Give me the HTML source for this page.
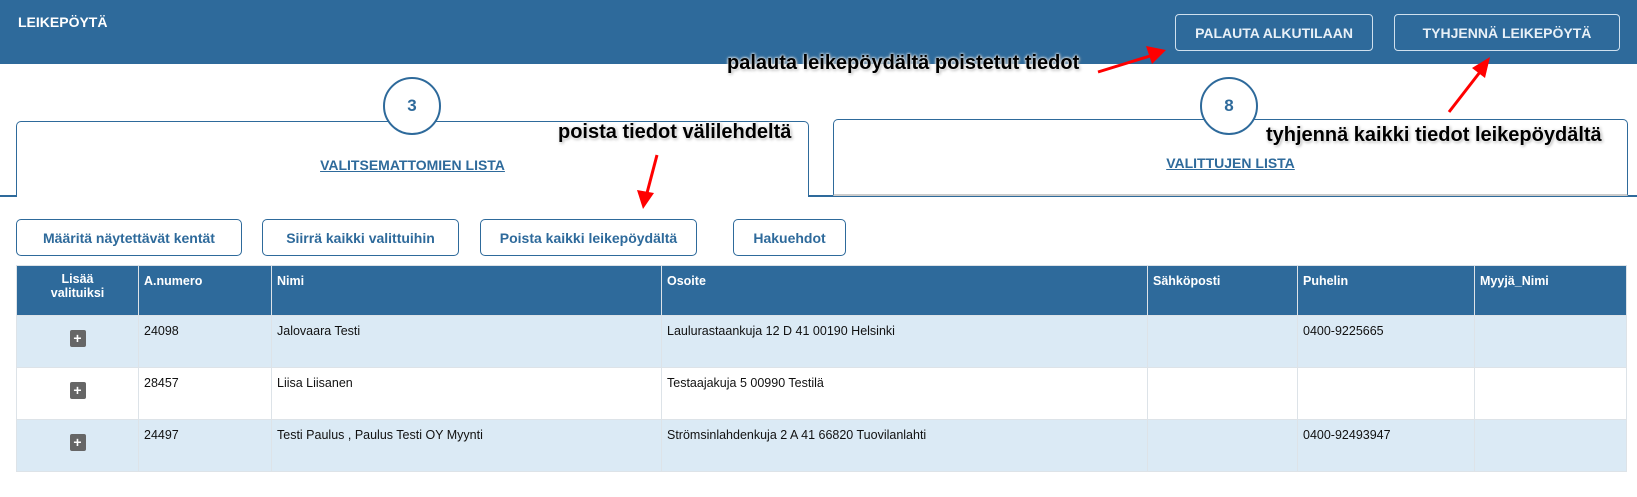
<!DOCTYPE html>
<html><head><meta charset="utf-8"><style>
*{box-sizing:border-box;margin:0;padding:0}
body{width:1637px;height:497px;background:#fff;font-family:"Liberation Sans",Arial,sans-serif;position:relative;overflow:hidden}
.hdr{position:absolute;left:0;top:0;width:1637px;height:64px;background:#2e6a9b}
.title{position:absolute;left:18px;top:14px;color:#fff;font-weight:bold;font-size:14px}
.hb{position:absolute;top:14px;height:37px;border:1px solid #cfe0ee;border-radius:4px;color:#e8f0f7;font-weight:bold;font-size:14px;display:flex;align-items:center;justify-content:center}
.line{position:absolute;top:195px;height:2px;background:#2e6a9b}
.tab{position:absolute;border:1.5px solid #2e6a9b;border-bottom:none;border-radius:5px 5px 0 0;background:#fff}
.tab a{position:absolute;left:0;right:0;text-align:center;color:#2e6a9b;font-weight:bold;font-size:14px;text-decoration:underline}
.circ{position:absolute;width:58px;height:58px;border:2px solid #2e6a9b;border-radius:50%;background:#fff;color:#2e6a9b;font-weight:bold;font-size:17px;display:flex;align-items:center;justify-content:center}
.btn{position:absolute;top:219px;height:37px;border:1px solid #2e6a9b;border-radius:5px;color:#2e6a9b;font-weight:bold;font-size:14px;display:flex;align-items:center;justify-content:center}
table{position:absolute;left:16px;top:265px;width:1611px;border-collapse:collapse;font-size:12.5px}
th{background:#2e6a9b;color:#fff;font-weight:bold;text-align:left;vertical-align:top;padding:8px 5px;height:50px;border:1px solid #dde3e8}
td{vertical-align:top;padding:8px 5px;height:52px;border:1px solid #dde3e8;color:#111}
tr.a td{background:#dbeaf5}
.plus{display:inline-block;width:16px;height:17px;background:#666;color:#fff;font-weight:bold;font-size:14px;line-height:16px;text-align:center;border-radius:2px;margin-top:6px}
.ann{position:absolute;font-weight:bold;font-size:20px;color:#000;white-space:nowrap;text-shadow:0 0 2px #fff,0 0 3px #fff,1px 1px 3px #888}
</style></head><body>
<div class="hdr"></div>
<div class="title">LEIKEPÖYTÄ</div>
<div class="hb" style="left:1175px;width:198px">PALAUTA ALKUTILAAN</div>
<div class="hb" style="left:1394px;width:226px">TYHJENNÄ LEIKEPÖYTÄ</div>

<div class="line" style="left:0;width:16px"></div>
<div class="line" style="left:808px;width:829px"></div>
<div class="tab" style="left:16px;top:121px;width:793px;height:76px"><a style="top:35px">VALITSEMATTOMIEN LISTA</a></div>
<div class="tab" style="left:833px;top:119px;width:795px;height:77px;border-bottom:2px solid #ccc"><a style="top:35px">VALITTUJEN LISTA</a></div>
<div class="circ" style="left:383px;top:77px">3</div>
<div class="circ" style="left:1200px;top:77px">8</div>

<div class="btn" style="left:16px;width:226px">Määritä näytettävät kentät</div>
<div class="btn" style="left:262px;width:197px">Siirrä kaikki valittuihin</div>
<div class="btn" style="left:480px;width:217px">Poista kaikki leikepöydältä</div>
<div class="btn" style="left:733px;width:113px">Hakuehdot</div>

<table>
<tr><th style="width:122px;text-align:center;padding-top:6px">Lisää<br>valituiksi</th><th style="width:133px">A.numero</th><th style="width:390px">Nimi</th><th style="width:486px">Osoite</th><th style="width:150px">Sähköposti</th><th style="width:177px">Puhelin</th><th>Myyjä_Nimi</th></tr>
<tr class="a"><td style="text-align:center"><span class="plus">+</span></td><td>24098</td><td>Jalovaara Testi</td><td>Laulurastaankuja 12 D 41 00190 Helsinki</td><td></td><td>0400-9225665</td><td></td></tr>
<tr><td style="text-align:center"><span class="plus">+</span></td><td>28457</td><td>Liisa Liisanen</td><td>Testaajakuja 5 00990 Testilä</td><td></td><td></td><td></td></tr>
<tr class="a"><td style="text-align:center"><span class="plus">+</span></td><td>24497</td><td>Testi Paulus , Paulus Testi OY Myynti</td><td>Strömsinlahdenkuja 2 A 41 66820 Tuovilanlahti</td><td></td><td>0400-92493947</td><td></td></tr>
</table>

<div class="ann" style="left:727px;top:52px">palauta leikepöydältä poistetut tiedot</div>
<div class="ann" style="left:558px;top:121px">poista tiedot välilehdeltä</div>
<div class="ann" style="left:1266px;top:124px">tyhjennä kaikki tiedot leikepöydältä</div>

<svg width="1637" height="497" style="position:absolute;left:0;top:0" fill="#f00" stroke="#f00">
<line x1="1098" y1="72" x2="1150" y2="56" stroke-width="3"/>
<polygon points="1166,50 1146,46 1152,64" stroke="none"/>
<line x1="1449" y1="112" x2="1480" y2="72" stroke-width="3"/>
<polygon points="1490,57 1472,68 1485,78" stroke="none"/>
<line x1="657" y1="155" x2="647" y2="193" stroke-width="3"/>
<polygon points="643,209 637,190 654,193" stroke="none"/>
</svg>
</body></html>
